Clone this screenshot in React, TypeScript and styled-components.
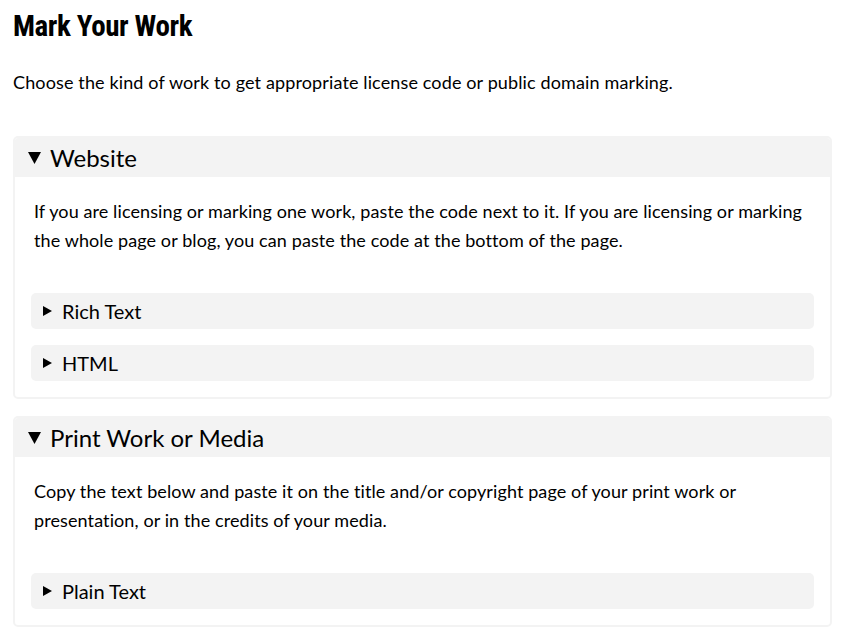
import React from "react";
import styled, { createGlobalStyle } from "styled-components";

const Global = createGlobalStyle`
  html, body { margin: 0; padding: 0; background: #fff; }
  body { font-family: "Source Sans Pro", Lato, "Noto Sans", sans-serif; color: #000; }
`;

const Page = styled.div`
  width: 819px;
  padding: 0 0 0 13px;
`;

const Title = styled.h1`
  font-family: "Roboto Condensed", "Liberation Sans Narrow", Roboto, sans-serif;
  font-weight: 700;
  font-size: 29px;
  line-height: 36px;
  margin: 8px 0 0;
  letter-spacing: -0.4px;
`;

const Lead = styled.p`
  font-size: 18px;
  letter-spacing: 0.13px;
  line-height: 29px;
  margin: 24px 0 39px;
`;

const Card = styled.section`
  border: 2px solid #f3f3f3;
  border-radius: 5px;
  margin-bottom: 17px;
  overflow: hidden;
`;

const CardHeader = styled.div`
  background: #f3f3f3;
  height: 39px;
  display: flex;
  align-items: center;
  gap: 9px;
  padding-left: 13px;
  font-size: 24px;
`;

const CardBody = styled.div`
  padding: 20px 16px 16px;
  display: flex;
  flex-direction: column;
`;

const BodyText = styled.p`
  font-size: 18px;
  letter-spacing: 0.1px;
  line-height: 29px;
  margin: 0 3px 38px;
`;

const SubBox = styled.div<{ $gap?: boolean }>`
  background: #f3f3f3;
  border-radius: 5px;
  height: 36px;
  display: flex;
  align-items: center;
  gap: 10px;
  padding-left: 12px;
  font-size: 20px;
  margin-top: ${(p) => (p.$gap ? "16px" : "0")};
`;

const Down = () => (
  <svg width="13" height="12" viewBox="0 0 13 12">
    <path d="M0 0H13L6.5 12Z" fill="#000" />
  </svg>
);

const Right = () => (
  <svg width="9" height="10" viewBox="0 0 9 10">
    <path d="M0 0L9 5L0 10Z" fill="#000" />
  </svg>
);

export default function App() {
  return (
    <Page>
      <Global />
      <Title>Mark Your Work</Title>
      <Lead>Choose the kind of work to get appropriate license code or public domain marking.</Lead>
      <Card>
        <CardHeader>
          <Down />
          <span>Website</span>
        </CardHeader>
        <CardBody>
          <BodyText>
            If you are licensing or marking one work, paste the code next to it. If you are licensing or marking
            the whole page or blog, you can paste the code at the bottom of the page.
          </BodyText>
          <SubBox>
            <Right />
            <span>Rich Text</span>
          </SubBox>
          <SubBox $gap>
            <Right />
            <span>HTML</span>
          </SubBox>
        </CardBody>
      </Card>
      <Card>
        <CardHeader>
          <Down />
          <span>Print Work or Media</span>
        </CardHeader>
        <CardBody>
          <BodyText>
            Copy the text below and paste it on the title and/or copyright page of your print work or
            presentation, or in the credits of your media.
          </BodyText>
          <SubBox>
            <Right />
            <span>Plain Text</span>
          </SubBox>
        </CardBody>
      </Card>
    </Page>
  );
}
